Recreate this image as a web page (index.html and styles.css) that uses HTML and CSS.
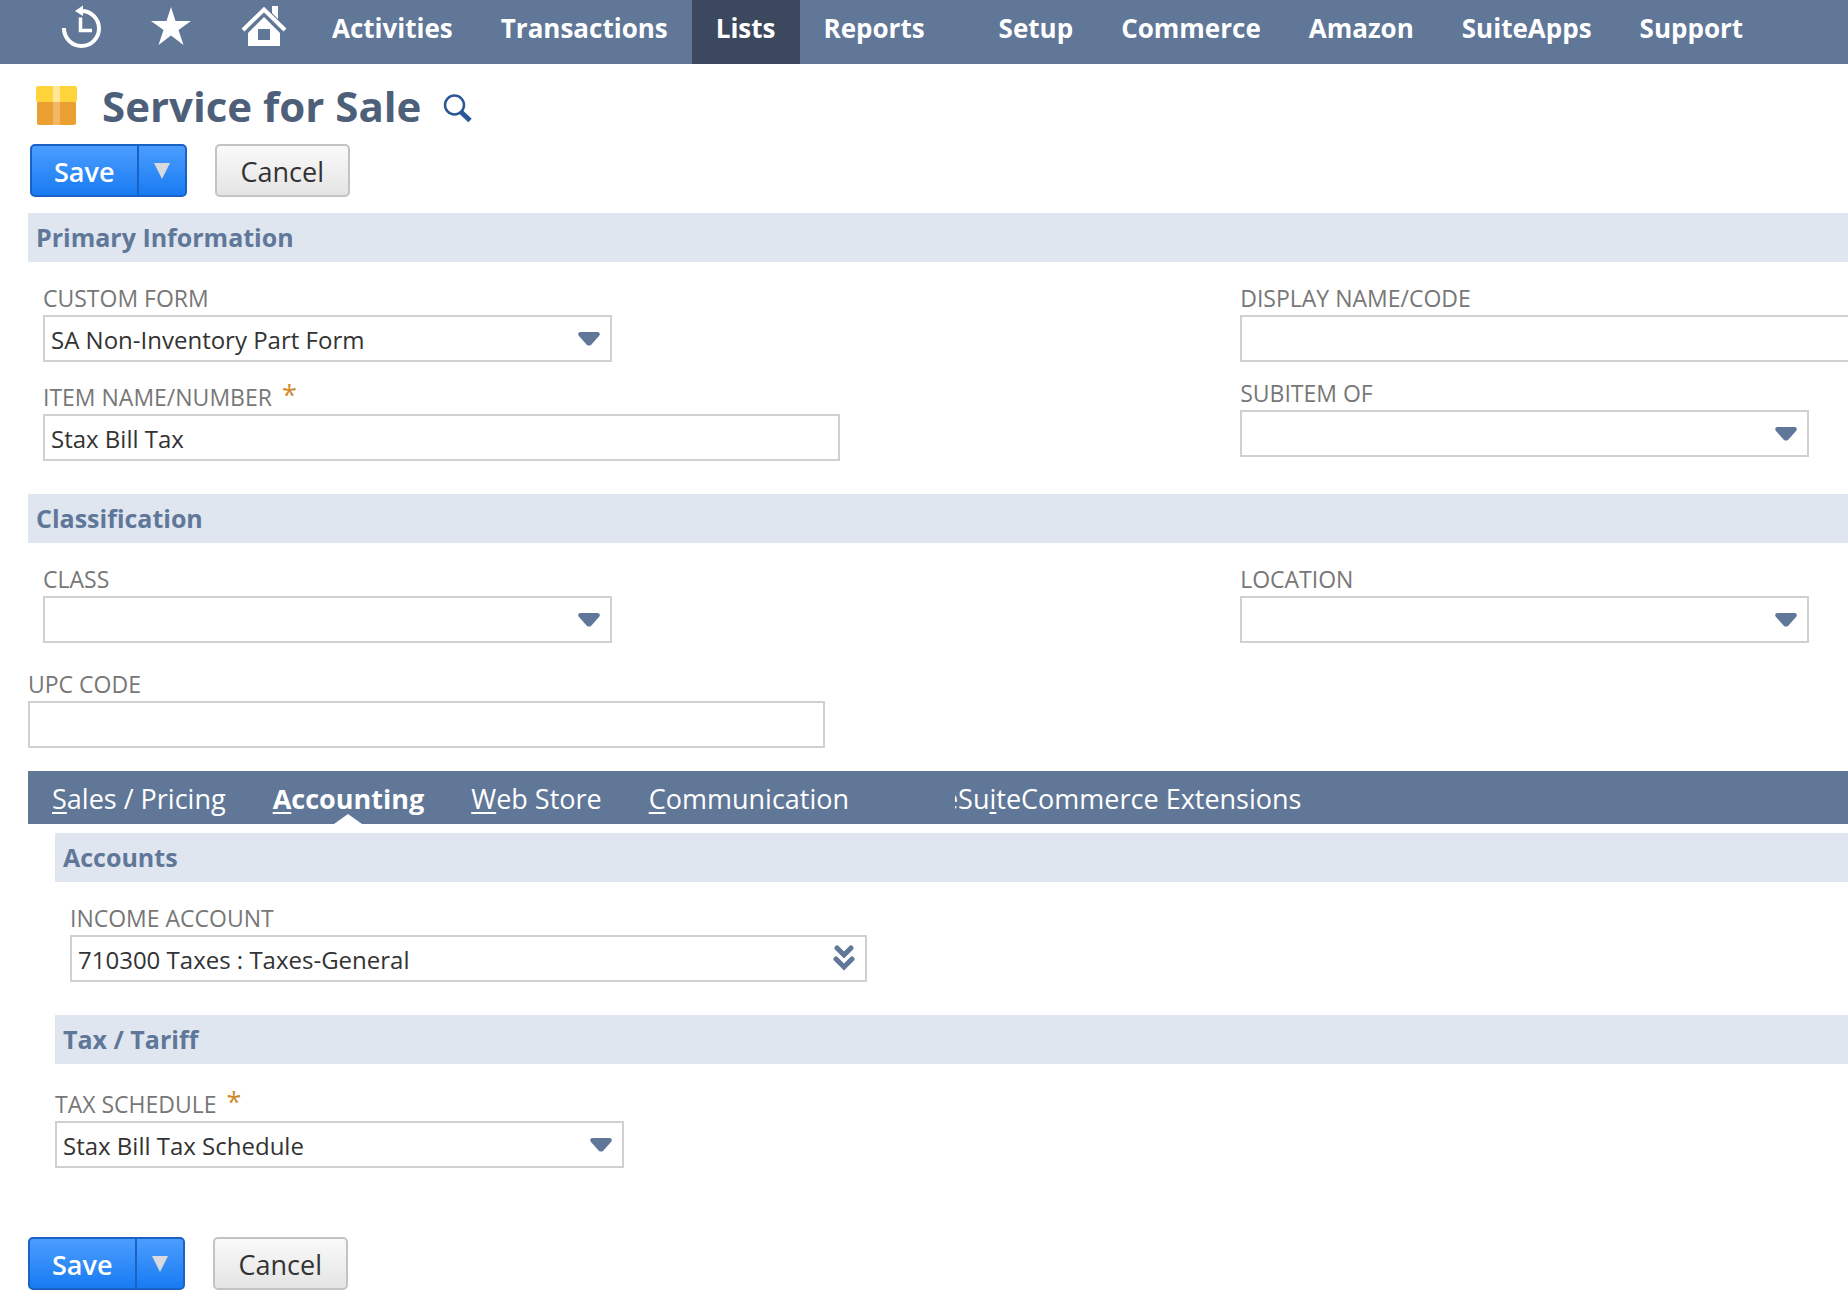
FILE: index.html
```html
<!DOCTYPE html>
<html lang="en">
<head>
    <meta charset="UTF-8" />
    <meta name="viewport" content="width=device-width, initial-scale=1.0" />
    <title>Service for Sale</title>
    <link rel="stylesheet" href="styles.css">
</head>
<body>
    <nav class="navbar">
        <a class="nav-icon" href="#" aria-label="Recent records">
            <svg width="40" height="48" viewBox="0 0 40 48" fill="none" stroke="#fff" stroke-width="4">
                <path d="M3 28A17.500 17.500 0 1 0 20 11" />
                <path d="M19.500 17.500V30.500H31" stroke-width="3.500" />
                <path d="M14 11L22 5.500V16Z" fill="#fff" stroke="none" />
            </svg>
        </a>
        <a class="nav-icon" href="#" aria-label="Shortcuts">
            <svg width="42" height="48" viewBox="0 0 42 48" fill="#fff">
                <path d="M21 7L25.500 21H41L28.500 30L33.500 45L21 35.500L8.500 45L13.500 30L1 21H16.500Z" />
            </svg>
        </a>
        <a class="nav-icon" href="#" aria-label="Home">
            <svg width="46" height="48" viewBox="0 0 46 48" fill="#fff">
                <path d="M31 6H37V19L31 13Z" />
                <path d="M2 30L23 9.500L44 30" fill="none" stroke="#fff" stroke-width="4" />
                <path fill-rule="evenodd" d="M23 17L39 33V46H7V33ZM17 29V40H29V29Z" />
            </svg>
        </a>
        <a class="nav-link" href="#">Activities</a>
        <a class="nav-link" href="#">Transactions</a>
        <a class="nav-link active" href="#">Lists</a>
        <a class="nav-link" href="#">Reports</a>
        <span class="nav-gap"></span>
        <a class="nav-link" href="#">Setup</a>
        <a class="nav-link" href="#">Commerce</a>
        <a class="nav-link" href="#">Amazon</a>
        <a class="nav-link" href="#">SuiteApps</a>
        <a class="nav-link" href="#">Support</a>
    </nav>

    <main class="page">
        <header class="page-title">
            <svg width="42" height="40" viewBox="0 0 42 40">
                <rect x="1" y="15" width="39" height="24" rx="2" fill="#eda032" />
                <rect x="0" y="0" width="41" height="16" rx="2" fill="#ffd43b" />
                <rect x="17" y="0" width="7" height="16" fill="#ffe799" />
                <rect x="17" y="16" width="7" height="23" fill="#f2b866" />
            </svg>
            <h1>Service for Sale</h1>
            <button class="search-btn" type="button" aria-label="Search">
                <svg width="30" height="30" viewBox="0 0 30 30" fill="none" stroke="#2b5797">
                    <circle cx="11.500" cy="12" r="9.500" stroke-width="2.500" />
                    <path d="M18 19L27 27.500" stroke-width="5" />
                </svg>
            </button>
        </header>

        <div class="actions">
            <div class="split-btn">
                <button class="btn-save" type="button">Save</button>
                <button class="btn-more" type="button" aria-label="More save options">
                    <svg width="16" height="16" viewBox="0 0 16 16"><path d="M0 0H16L8 16Z" fill="#d8dade" /></svg>
                </button>
            </div>
            <button class="btn-cancel" type="button">Cancel</button>
        </div>

        <h2 class="section-title">Primary Information</h2>
        <div class="columns">
            <div class="column">
                <div class="field">
                    <label for="customForm">Custom Form</label>
                    <div class="select-box">
                        <select id="customForm"><option>SA Non-Inventory Part Form</option></select>
                        <svg class="arrow" width="22" height="14" viewBox="0 0 22 14"><path d="M2 0H20Q23 1 21 4L13 13Q11 14 9 13L1 4Q-1 1 2 0Z" fill="#607799" /></svg>
                    </div>
                </div>
                <div class="field required">
                    <label for="itemName">Item Name/Number <span class="star">*</span></label>
                    <input id="itemName" type="text" value="Stax Bill Tax">
                </div>
            </div>
            <div class="column">
                <div class="field">
                    <label for="displayName">Display Name/Code</label>
                    <input id="displayName" class="wide" type="text">
                </div>
                <div class="field">
                    <label for="subitemOf">Subitem of</label>
                    <div class="select-box">
                        <select id="subitemOf"><option></option></select>
                        <svg class="arrow" width="22" height="14" viewBox="0 0 22 14"><path d="M2 0H20Q23 1 21 4L13 13Q11 14 9 13L1 4Q-1 1 2 0Z" fill="#607799" /></svg>
                    </div>
                </div>
            </div>
        </div>

        <h2 class="section-title">Classification</h2>
        <div class="columns">
            <div class="field">
                <label for="class">Class</label>
                <div class="select-box">
                    <select id="class"><option></option></select>
                    <svg class="arrow" width="22" height="14" viewBox="0 0 22 14"><path d="M2 0H20Q23 1 21 4L13 13Q11 14 9 13L1 4Q-1 1 2 0Z" fill="#607799" /></svg>
                </div>
            </div>
            <div class="field">
                <label for="location">Location</label>
                <div class="select-box">
                    <select id="location"><option></option></select>
                    <svg class="arrow" width="22" height="14" viewBox="0 0 22 14"><path d="M2 0H20Q23 1 21 4L13 13Q11 14 9 13L1 4Q-1 1 2 0Z" fill="#607799" /></svg>
                </div>
            </div>
        </div>
        <div class="field upc">
            <label for="upcCode">UPC Code</label>
            <input id="upcCode" type="text">
        </div>

        <nav class="tabs">
            <a href="#"><u>S</u>ales / Pricing</a>
            <a class="current" href="#"><u>A</u>ccounting</a>
            <a href="#"><u>W</u>eb Store</a>
            <a href="#"><u>C</u>ommunication</a>
            <span class="tab-cut">e</span>
            <a href="#">Su<u>i</u>teCommerce Extensions</a>
        </nav>

        <section class="tab-panel">
            <h2 class="section-title">Accounts</h2>
            <div class="columns">
                <div class="field">
                    <label for="incomeAccount">Income Account</label>
                    <div class="select-box wide">
                        <select id="incomeAccount"><option>710300 Taxes : Taxes-General</option></select>
                        <svg class="arrow" width="22" height="26" viewBox="0 0 22 26" fill="none" stroke="#607799" stroke-width="5" stroke-linecap="round"><path d="M4 3L11 10L18 3M3 14L11 22L19 14" /></svg>
                    </div>
                </div>
            </div>
            <h2 class="section-title">Tax / Tariff</h2>
            <div class="field required tax">
                <label for="taxSchedule">Tax Schedule <span class="star">*</span></label>
                <div class="select-box">
                    <select id="taxSchedule"><option>Stax Bill Tax Schedule</option></select>
                    <svg class="arrow" width="22" height="14" viewBox="0 0 22 14"><path d="M2 0H20Q23 1 21 4L13 13Q11 14 9 13L1 4Q-1 1 2 0Z" fill="#607799" /></svg>
                </div>
            </div>
        </section>

        <div class="actions bottom">
            <div class="split-btn">
                <button class="btn-save" type="button">Save</button>
                <button class="btn-more" type="button" aria-label="More save options">
                    <svg width="16" height="16" viewBox="0 0 16 16"><path d="M0 0H16L8 16Z" fill="#d8dade" /></svg>
                </button>
            </div>
            <button class="btn-cancel" type="button">Cancel</button>
        </div>
    </main>
</body>
</html>
```
FILE: styles.css
```css
* { box-sizing: border-box; }
body { margin: 0; overflow-x: hidden; background: #fff; color: #333; font-family: "Open Sans", sans-serif; font-size: 24px; }
a { color: inherit; text-decoration: none; }
button, input, select { font: inherit; color: inherit; }
h1, h2 { margin: 0; }
svg { display: block; }

/* Top navigation */
.navbar { display: flex; height: 64px; padding-left: 61px; background: #617798; color: #fff; white-space: nowrap; }
.nav-icon { margin-right: 49px; }
.nav-icon + .nav-link { margin-left: -28px; }
.nav-link { padding: 0 24px; font-size: 26px; font-weight: 700; line-height: 56px; }
.nav-link.active { background: #3c485e; }
.nav-gap { width: 26px; }

/* Title and buttons */
.page { padding-left: 28px; }
.page-title { display: flex; align-items: center; height: 80px; padding: 4px 0 0 8px; }
.page-title h1 { margin: 0 22px 0 24px; color: #4d5f79; font-size: 42px; font-weight: 700; line-height: 56px; }
.search-btn { padding: 4px 0 0; border: 0; background: none; cursor: pointer; }
.actions { display: flex; gap: 28px; padding: 0 0 15px 2px; }
.actions.bottom { padding: 69px 0 19px; }
.actions button { height: 53px; font-size: 27px; cursor: pointer; }
.split-btn { display: flex; border: 2px solid #1a62c4; border-radius: 5px; background: linear-gradient(#4c9dff, #187bf2); }
.actions .split-btn button { height: 49px; border: 0; background: none; color: #fff; }
.split-btn .btn-save { padding: 2px 22px 0; font-weight: 600; }
.actions .split-btn .btn-more { padding: 0 15px; border-left: 2px solid #1a62c4; }
.btn-cancel { padding: 2px 24px 0; border: 2px solid #c3c3c3; border-radius: 5px; background: linear-gradient(#fafafa, #e4e4e4); }

/* Form */
.section-title { height: 49px; margin-top: 1px; padding-left: 8px; background: #dfe6ef; color: #607799; font-size: 25px; font-weight: 700; line-height: 49px; }
.columns { display: grid; grid-template-columns: minmax(0, 65fr) minmax(0, 33fr); padding: 21px 0 32px 15px; }
.column { display: flex; flex-direction: column; gap: 16px; }
.column .required { padding-top: 4px; }
.field label { display: block; height: 32px; color: #777; font-size: 23px; line-height: 30px; text-transform: uppercase; }
.field input, .select-box select { display: block; width: 100%; height: 47px; padding: 2px 6px 0; border: 2px solid #d0d0d0; border-radius: 0; background: #fff; }
.field input { max-width: 797px; }
.field input.wide { width: 797px; }
.star { margin-left: 4px; color: #d08a2e; font-size: 27px; line-height: 0; vertical-align: 1px; }
.select-box { position: relative; max-width: 569px; }
.select-box.wide { max-width: 797px; }
.select-box select { appearance: none; }
.arrow { position: absolute; top: 17px; right: 12px; pointer-events: none; }
.select-box.wide .arrow { top: 10px; }
.upc { margin: -6px 0 23px; }

/* Subtabs */
.tabs { display: flex; height: 53px; padding-left: 24px; background: #617798; color: #fff; font-size: 27px; line-height: 56px; white-space: nowrap; }
.tabs a { margin-right: 47px; }
.tabs u { text-underline-offset: 3px; }
.tabs .current { position: relative; font-weight: 700; }
.tabs .current::after { content: ""; position: absolute; bottom: 0; left: 50%; margin-left: -14px; border: 14px solid transparent; border-top: 0; border-bottom: 10px solid #fff; }
.tab-cut { display: flex; justify-content: flex-end; width: 3px; margin-left: 59px; overflow: hidden; }
.tab-panel { padding: 8px 0 0 27px; }
.tax { padding-top: 25px; }
```
